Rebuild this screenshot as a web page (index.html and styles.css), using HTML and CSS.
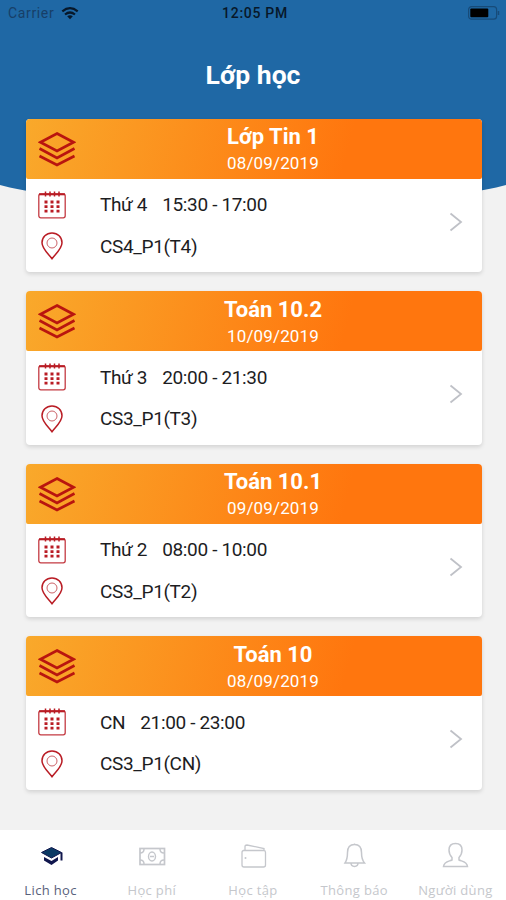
FILE: index.html
```html
<!DOCTYPE html>
<html lang="vi">
<head>
<meta charset="utf-8">
<title>Lớp học</title>
<link rel="stylesheet" href="styles.css">
</head>
<body>
<svg class="defs" width="0" height="0" aria-hidden="true">
  <symbol id="layers" viewBox="0 0 38 36"><path d="M19 2.500 35.500 11.300 19 20 2.500 11.300Z M1.500 17.500 19 27 36.500 17.500 M1.500 25 19 34 36.500 25" fill="none" stroke="#b9150f" stroke-width="2.700"/></symbol>
  <symbol id="calendar" viewBox="0 0 28 28"><rect x=".8" y="2.800" width="26.400" height="24" rx="2" fill="none" stroke="#c43a42" stroke-width="1.300"/><path d="M1 3.300H27" stroke="#b91c24" stroke-width="2"/><path d="M7.500 .5V5.500M12 .5V5.500M16.500 .5V5.500M21 .5V5.500" stroke="#b91c24" stroke-width="1.500"/><path d="M6.500 11H21.500M6.500 15.700H21.500M6.500 20.200H21.500" stroke="#b91c24" stroke-width="2.800" stroke-dasharray="3 3"/></symbol>
  <symbol id="pin" viewBox="0 0 22 28"><path d="M11 1C5.300 1 1 5.200 1 10.800 1 16.500 6.500 21 11 26.700 15.500 21 21 16.500 21 10.800 21 5.200 16.700 1 11 1Z" fill="none" stroke="#b91c24" stroke-width="1.500"/><circle cx="11" cy="11" r="5" fill="none" stroke="#cb6268"/></symbol>
  <symbol id="chevron" viewBox="0 0 14 20"><path d="M1.500 1.500 12 10 1.500 18.500" fill="none" stroke="#bfc1c7" stroke-width="1.800"/></symbol>
</svg>
<main class="screen">
  <svg class="backdrop" viewBox="0 0 506 220" aria-hidden="true"><path d="M0 0H506V185C480 192 455 195 400 200H106C51 195 26 192 0 185Z" fill="#1f68a5"/></svg>
  <header class="status">
    <div class="carrier"><span>Carrier</span>
      <svg width="18" height="13" viewBox="0 0 18 13"><path d="M1.300 4.400Q9-2 16.700 4.400M4 7.500Q9 3.500 14 7.500" fill="none" stroke="#07182a" stroke-width="2.200"/><path d="M9 12.300 6.200 9.300Q9 7.300 11.800 9.300Z" fill="#07182a"/></svg>
    </div>
    <time>12:05 PM</time>
    <svg class="battery" width="32" height="14" viewBox="0 0 32 14"><rect x=".6" y=".6" width="28" height="12.600" rx="3" fill="none" stroke="#174b79" stroke-width="1.200"/><rect x="2.300" y="2.500" width="18" height="8.800" rx="1" fill="#000"/><path d="M30.500 5V9" stroke="#174b79" stroke-width="1.500"/></svg>
  </header>
  <h1>Lớp học</h1>
  <section class="classes">
    <article class="card">
      <div class="card-head"><svg class="layers"><use href="#layers"/></svg><div class="heading"><h2>Lớp Tin 1</h2><p>08/09/2019</p></div></div>
      <div class="card-body"><div class="details"><div class="row"><svg class="calendar"><use href="#calendar"/></svg><span class="day">Thứ 4</span><span>15:30 - 17:00</span></div><div class="row"><svg class="pin"><use href="#pin"/></svg><span>CS4_P1(T4)</span></div></div><svg class="chevron"><use href="#chevron"/></svg></div>
    </article>
    <article class="card">
      <div class="card-head"><svg class="layers"><use href="#layers"/></svg><div class="heading"><h2>Toán 10.2</h2><p>10/09/2019</p></div></div>
      <div class="card-body"><div class="details"><div class="row"><svg class="calendar"><use href="#calendar"/></svg><span class="day">Thứ 3</span><span>20:00 - 21:30</span></div><div class="row"><svg class="pin"><use href="#pin"/></svg><span>CS3_P1(T3)</span></div></div><svg class="chevron"><use href="#chevron"/></svg></div>
    </article>
    <article class="card">
      <div class="card-head"><svg class="layers"><use href="#layers"/></svg><div class="heading"><h2>Toán 10.1</h2><p>09/09/2019</p></div></div>
      <div class="card-body"><div class="details"><div class="row"><svg class="calendar"><use href="#calendar"/></svg><span class="day">Thứ 2</span><span>08:00 - 10:00</span></div><div class="row"><svg class="pin"><use href="#pin"/></svg><span>CS3_P1(T2)</span></div></div><svg class="chevron"><use href="#chevron"/></svg></div>
    </article>
    <article class="card">
      <div class="card-head"><svg class="layers"><use href="#layers"/></svg><div class="heading"><h2>Toán 10</h2><p>08/09/2019</p></div></div>
      <div class="card-body"><div class="details"><div class="row"><svg class="calendar"><use href="#calendar"/></svg><span class="day">CN</span><span>21:00 - 23:00</span></div><div class="row"><svg class="pin"><use href="#pin"/></svg><span>CS3_P1(CN)</span></div></div><svg class="chevron"><use href="#chevron"/></svg></div>
    </article>
  </section>
  <nav class="tabs">
    <a class="tab active"><svg viewBox="0 0 28 28"><path d="M4.500 10.500 14.500 5.500 24.500 10.500 14.500 16Z" fill="#0b3a64" stroke="#10164d"/><path d="M24.500 10.500V18.500" stroke="#10164d" stroke-width="2"/><path d="M7 15 14.500 19 21 15V18.500L14.500 23 7 18.500Z" fill="#10164d"/></svg><span>Lich học</span></a>
    <a class="tab"><svg viewBox="0 0 28 28"><rect x="2" y="6.500" width="24.500" height="16" fill="none" stroke="#c5c7cc" stroke-width="1.700"/><path d="M2 11Q6 11 6 7M22 7Q22 11 26 11M2 18Q6 18 6 22M22 22Q22 18 26 18" fill="none" stroke="#c5c7cc" stroke-width="1.500"/><ellipse cx="14" cy="14.500" rx="3.500" ry="4.500" fill="none" stroke="#c5c7cc" stroke-width="1.400"/><path d="M12 14.500H16" stroke="#c5c7cc" stroke-width="1.500"/></svg><span>Học phí</span></a>
    <a class="tab"><svg viewBox="0 0 28 28"><g fill="none" stroke="#c5c7cc" stroke-width="1.300"><path d="M4 8.500H25Q26.500 8.500 26.500 10.500V23Q26.500 25 24.500 25H5Q3 25 3 23V10.500Q3 8.500 5 8.500M6 8.500V4.500Q6 3 8 3L25 6.500V8.500"/></g><circle cx="6.500" cy="16" r="1" fill="#c5c7cc"/></svg><span>Học tập</span></a>
    <a class="tab"><svg viewBox="0 0 28 28"><path d="M14.500 1.500V2.500M14.500 2.500C9.500 2.500 7.500 6 7.500 10.500 7.500 16 7 18 5 21H24.500C22 18 21.500 16 21.500 10.500 21.500 6 19.500 2.500 14.500 2.500ZM11 21C11 25.500 18 25.500 18 21" fill="none" stroke="#c5c7cc" stroke-width="1.500"/></svg><span>Thông báo</span></a>
    <a class="tab"><svg viewBox="0 0 28 28"><path d="M14.500 1.500C10 1.500 8 4.500 8 8 8 12 9.500 14 11 15.500V18C7.500 19.500 3 19.500 2.500 24.500H26.500C26 19.500 21.500 19.500 18 18V15.500C19.500 14 21 12 21 8 21 4.500 19 1.500 14.500 1.500Z" fill="none" stroke="#c5c7cc" stroke-width="1.500"/></svg><span>Người dùng</span></a>
  </nav>
</main>
</body>
</html>
```

FILE: styles.css
```css
* { box-sizing: border-box; }
body { margin: 0; background: #f2f2f2; color: #1d1d1f; font-family: Roboto, "Liberation Sans", sans-serif; }
h1, h2, p { margin: 0; }
svg { display: block; flex: none; }
.defs { position: absolute; }
.screen { position: relative; display: flex; flex-direction: column; height: 900px; overflow: hidden; }
.backdrop { position: absolute; z-index: -1; top: 0; left: 0; width: 506px; height: 220px; }
.status { display: grid; grid-template-columns: 1fr auto 1fr; align-items: center; height: 26px; padding: 0 6px 0 8px; font-size: 13px; color: #07182a; }
.status time { padding-left: 2px; font-weight: 500; font-size: 14px; letter-spacing: .7px; }
.carrier { display: flex; align-items: center; gap: 7px; color: #173f68; font-size: 14px; letter-spacing: .65px; }
.battery { justify-self: end; }
h1 { height: 92.500px; padding-top: 32px; color: #fff; font-size: 26.500px; line-height: 34px; text-align: center; }
.classes { display: flex; flex-direction: column; gap: 19px; padding: 0 24px 0 25.500px; }
.card { height: 153.500px; border-radius: 4px; background: #fff; box-shadow: 0 2px 4px #0002; }
.card-head { position: relative; display: flex; align-items: center; height: 60px; padding-left: 12.500px; border-radius: 4px 4px 2px 2px; background: linear-gradient(105deg, #f9a92b 0%, #ff760e 70%, #ff760e 100%); }
.layers { width: 38px; height: 36px; }
.heading { flex: 1; margin-right: 12px; padding-top: 2px; color: #fff; text-align: center; }
.heading h2 { font-size: 22px; line-height: 26px; font-weight: 700; }
.heading p { margin-top: 1px; font-size: 17px; line-height: 24px; letter-spacing: .15px; }
.card-body { display: flex; align-items: center; justify-content: space-between; height: 93.500px; padding: 5px 19px 5px 12px; }
.details { display: flex; flex-direction: column; }
.row { display: flex; align-items: center; height: 41.500px; font-size: 19px; letter-spacing: -.35px; white-space: pre; }
.calendar { width: 28px; height: 28px; margin-right: 34.500px; }
.pin { width: 22px; height: 28px; margin: 0 37.500px 0 3px; }
.day { margin-right: 15px; }
.chevron { width: 14px; height: 20px; margin-bottom: 7px; }
.tabs { display: grid; grid-template-columns: repeat(5, 1fr); height: 70px; margin-top: auto; background: #fff; }
.tab { display: flex; flex-direction: column; align-items: center; padding-top: 12px; color: #c5c7cc; font-family: "Open Sans", sans-serif; font-size: 13px; line-height: 18px; letter-spacing: .35px; white-space: nowrap; }
.tab svg { width: 28px; height: 28px; margin-bottom: 11px; }
.active { color: #59617b; }
```
